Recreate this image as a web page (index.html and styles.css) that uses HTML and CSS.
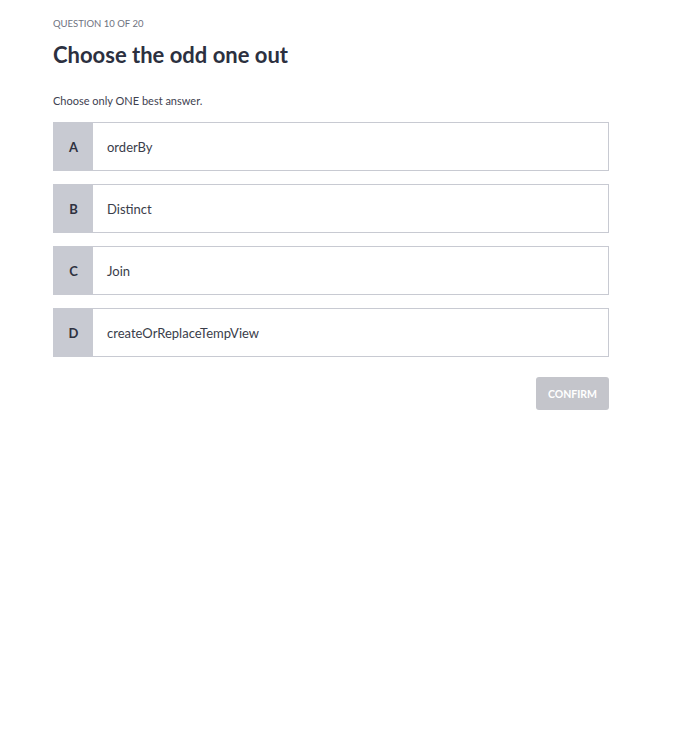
FILE: index.html
```html
<!DOCTYPE html>
<html>
<head>
<meta charset="utf-8">
<link rel="stylesheet" href="styles.css">
</head>
<body>
<main class="quiz">
  <div class="counter">QUESTION 10 OF 20</div>
  <h1 class="title">Choose the odd one out</h1>
  <p class="hint">Choose only ONE best answer.</p>
  <div class="options">
    <div class="option"><div class="letter">A</div><div class="label">orderBy</div></div>
    <div class="option"><div class="letter">B</div><div class="label">Distinct</div></div>
    <div class="option"><div class="letter">C</div><div class="label">Join</div></div>
    <div class="option"><div class="letter">D</div><div class="label">createOrReplaceTempView</div></div>
  </div>
  <div class="actions"><button class="confirm">CONFIRM</button></div>
</main>
</body>
</html>
```
FILE: styles.css
```css
html, body { margin: 0; background: #fff; }
body { font-family: Lato, "Noto Sans", sans-serif; color: #3a3d4a; }
.quiz { width: 556px; margin-left: 53px; padding-top: 18px; }
.counter { font-size: 9.5px; color: #6e7280; line-height: 12px; }
.title { margin: 0; margin-top: 11px; font-size: 22px; font-weight: 700; color: #2c3040; line-height: 28px; }
.hint { margin: 0; margin-top: 25px; font-size: 11px; line-height: 14px; color: #3e4150; }
.options { margin-top: 14px; display: flex; flex-direction: column; gap: 13px; }
.option { display: flex; height: 49px; box-sizing: border-box; border: 1px solid #c8cad2; }
.letter { width: 39px; background: #c8cad2; display: flex; align-items: center; justify-content: center; font-size: 13px; font-weight: 700; color: #2e3140; }
.label { display: flex; align-items: center; padding-left: 14px; font-size: 13px; color: #3a3d4a; }
.actions { display: flex; justify-content: flex-end; margin-top: 20px; }
.confirm { width: 73px; height: 33px; border: 0; border-radius: 3px; background: #c4c5cb; color: #fff; font-family: inherit; font-size: 10.5px; font-weight: 700; padding: 0; }
```
